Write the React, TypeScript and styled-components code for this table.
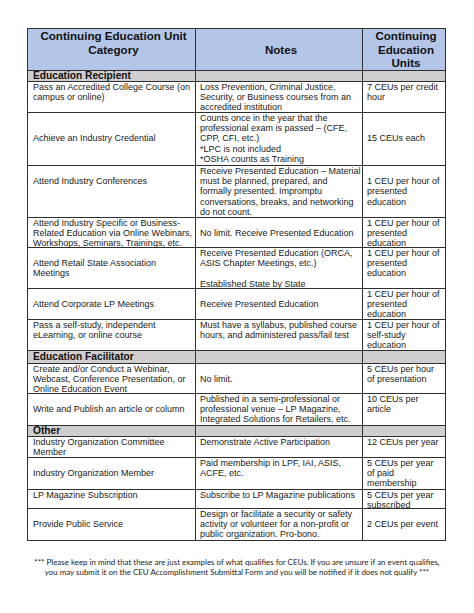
import React from "react";
import styled, { createGlobalStyle } from "styled-components";

const Global = createGlobalStyle`
  html, body { margin: 0; padding: 0; background: #ffffff; }
  body { font-family: "Liberation Sans", Arial, sans-serif; color: #111; }
`;

const Page = styled.div`
  width: 474px;
  height: 613px;
  padding: 28px 0 0 27px;
  box-sizing: border-box;
`;

const Table = styled.div`
  width: 419px;
  box-sizing: border-box;
  border: 1.4px solid #2f2f2f;
  border-top-width: 1px;
`;

const Row = styled.div<{ $h: number; $bg?: string; $first?: boolean }>`
  display: grid;
  grid-template-columns: 167px 167px 1fr;
  height: ${(p) => p.$h}px;
  box-sizing: border-box;
  border-top: ${(p) => (p.$first ? "0" : "1px solid #2f2f2f")};
  background: ${(p) => p.$bg || "transparent"};
`;

const Cell = styled.div<{ $v?: "top" | "middle"; $center?: boolean; $sep?: boolean; $pad?: number }>`
  display: flex;
  flex-direction: column;
  justify-content: ${(p) => (p.$v === "middle" ? "center" : "flex-start")};
  align-items: ${(p) => (p.$center ? "center" : "flex-start")};
  text-align: ${(p) => (p.$center ? "center" : "left")};
  padding-left: ${(p) => p.$pad ?? 4}px;
  border-left: ${(p) => (p.$sep ? "1.4px solid #2f2f2f" : "0")};
  box-sizing: border-box;
  overflow: visible;
  min-width: 0;
`;

const HeadText = styled.div`
  font-size: 11.6px;
  font-weight: bold;
  line-height: 13.5px;
  white-space: nowrap;
  color: #111;
`;

const SectionText = styled.div`
  font-size: 10.2px;
  font-weight: bold;
  line-height: 10.6px;
  white-space: nowrap;
  color: #111;
`;

const Line = styled.div`
  font-size: 9px;
  line-height: 10.2px;
  white-space: nowrap;
  color: #1a1a1a;
  min-height: 10.2px;
`;

const Footer = styled.div`
  width: 474px;
  margin: 16px 0 0 -27px;
  text-align: center;
  font-family: Lato, "Open Sans", sans-serif;
  font-size: 7.95px;
  line-height: 10px;
  color: #222;
`;

type Entry = { cat: string[]; notes: string[]; units: string[]; h: number };
type Section = { title: string; h: number; rows: Entry[] };

const sections: Section[] = [
  {
    title: "Education Recipient",
    h: 11,
    rows: [
      {
        h: 31,
        cat: ["Pass an Accredited College Course (on", "campus or online)"],
        notes: ["Loss Prevention, Criminal Justice,", "Security, or Business courses from an", "accredited institution"],
        units: ["7 CEUs per credit", "hour"],
      },
      {
        h: 53,
        cat: ["", "", "Achieve an Industry Credential"],
        notes: [
          "Counts once in the year that the",
          "professional exam is passed – (CFE,",
          "CPP, CFI, etc.)",
          "*LPC is not included",
          "*OSHA counts as Training",
        ],
        units: ["", "", "15 CEUs each"],
      },
      {
        h: 52,
        cat: ["", "Attend Industry Conferences"],
        notes: [
          "Receive Presented Education – Material",
          "must be planned, prepared, and",
          "formally presented. Impromptu",
          "conversations, breaks, and networking",
          "do not count.",
        ],
        units: ["", "1 CEU per hour of", "presented", "education"],
      },
      {
        h: 30,
        cat: ["Attend Industry Specific or Business-", "Related Education via Online Webinars,", "Workshops, Seminars, Trainings, etc."],
        notes: ["", "No limit. Receive Presented Education"],
        units: ["1 CEU per hour of", "presented", "education"],
      },
      {
        h: 41,
        cat: ["", "Attend Retail State Association", "Meetings"],
        notes: ["Receive Presented Education (ORCA,", "ASIS Chapter Meetings, etc.)", "", "Established State by State"],
        units: ["1 CEU per hour of", "presented", "education"],
      },
      {
        h: 31,
        cat: ["", "Attend Corporate LP Meetings"],
        notes: ["", "Receive Presented Education"],
        units: ["1 CEU per hour of", "presented", "education"],
      },
      {
        h: 31,
        cat: ["Pass a self-study, independent", "eLearning, or online course"],
        notes: ["Must have a syllabus, published course", "hours, and administered pass/fail test"],
        units: ["1 CEU per hour of", "self-study", "education"],
      },
    ],
  },
  {
    title: "Education Facilitator",
    h: 13,
    rows: [
      {
        h: 30,
        cat: ["Create and/or Conduct a Webinar,", "Webcast, Conference Presentation, or", "Online Education Event"],
        notes: ["", "No limit."],
        units: ["5 CEUs per hour", "of presentation"],
      },
      {
        h: 32,
        cat: ["", "Write and Publish an article or column"],
        notes: ["Published in a semi-professional or", "professional venue – LP Magazine,", "Integrated Solutions for Retailers, etc."],
        units: ["10 CEUs per", "article"],
      },
    ],
  },
  {
    title: "Other",
    h: 11,
    rows: [
      {
        h: 21,
        cat: ["Industry Organization Committee", "Member"],
        notes: ["Demonstrate Active Participation"],
        units: ["12 CEUs per year"],
      },
      {
        h: 32,
        cat: ["", "Industry Organization Member"],
        notes: ["Paid membership in LPF, IAI, ASIS,", "ACFE, etc."],
        units: ["5 CEUs per year", "of paid", "membership"],
      },
      {
        h: 19,
        cat: ["LP Magazine Subscription"],
        notes: ["Subscribe to LP Magazine publications"],
        units: ["5 CEUs per year", "subscribed"],
      },
      {
        h: 32,
        cat: ["", "Provide Public Service"],
        notes: ["Design or facilitate a security or safety", "activity or volunteer for a non-profit or", "public organization. Pro-bono."],
        units: ["", "2 CEUs per event"],
      },
    ],
  },
];

const Lines: React.FC<{ lines: string[] }> = ({ lines }) => (
  <>
    {lines.map((l, i) => (
      <Line key={i}>{l || "\u00a0"}</Line>
    ))}
  </>
);

export default function App() {
  return (
    <>
      <Global />
      <Page>
        <Table>
          <Row $h={41} $bg="#b4c6e7" $first>
            <Cell $center $v="top">
              <HeadText>Continuing Education Unit</HeadText>
              <HeadText>Category</HeadText>
            </Cell>
            <Cell $center $v="middle" $sep>
              <HeadText>Notes</HeadText>
            </Cell>
            <Cell $center $v="middle" $sep>
              <HeadText>Continuing</HeadText>
              <HeadText>Education</HeadText>
              <HeadText>Units</HeadText>
            </Cell>
          </Row>
          {sections.map((s) => (
            <React.Fragment key={s.title}>
              <Row $h={s.h} $bg="#d0cece">
                <Cell $v="middle" $pad={5}>
                  <SectionText>{s.title}</SectionText>
                </Cell>
                <Cell $sep />
                <Cell $sep />
              </Row>
              {s.rows.map((r, i) => (
                <Row key={i} $h={r.h}>
                  <Cell $pad={5}>
                    <Lines lines={r.cat} />
                  </Cell>
                  <Cell $sep>
                    <Lines lines={r.notes} />
                  </Cell>
                  <Cell $sep>
                    <Lines lines={r.units} />
                  </Cell>
                </Row>
              ))}
            </React.Fragment>
          ))}
        </Table>
        <Footer>
          *** Please keep in mind that these are just examples of what qualifies for CEUs. If you are unsure if an event qualifies,
          <br />
          you may submit it on the CEU Accomplishment Submittal Form and you will be notified if it does not qualify ***
        </Footer>
      </Page>
    </>
  );
}
